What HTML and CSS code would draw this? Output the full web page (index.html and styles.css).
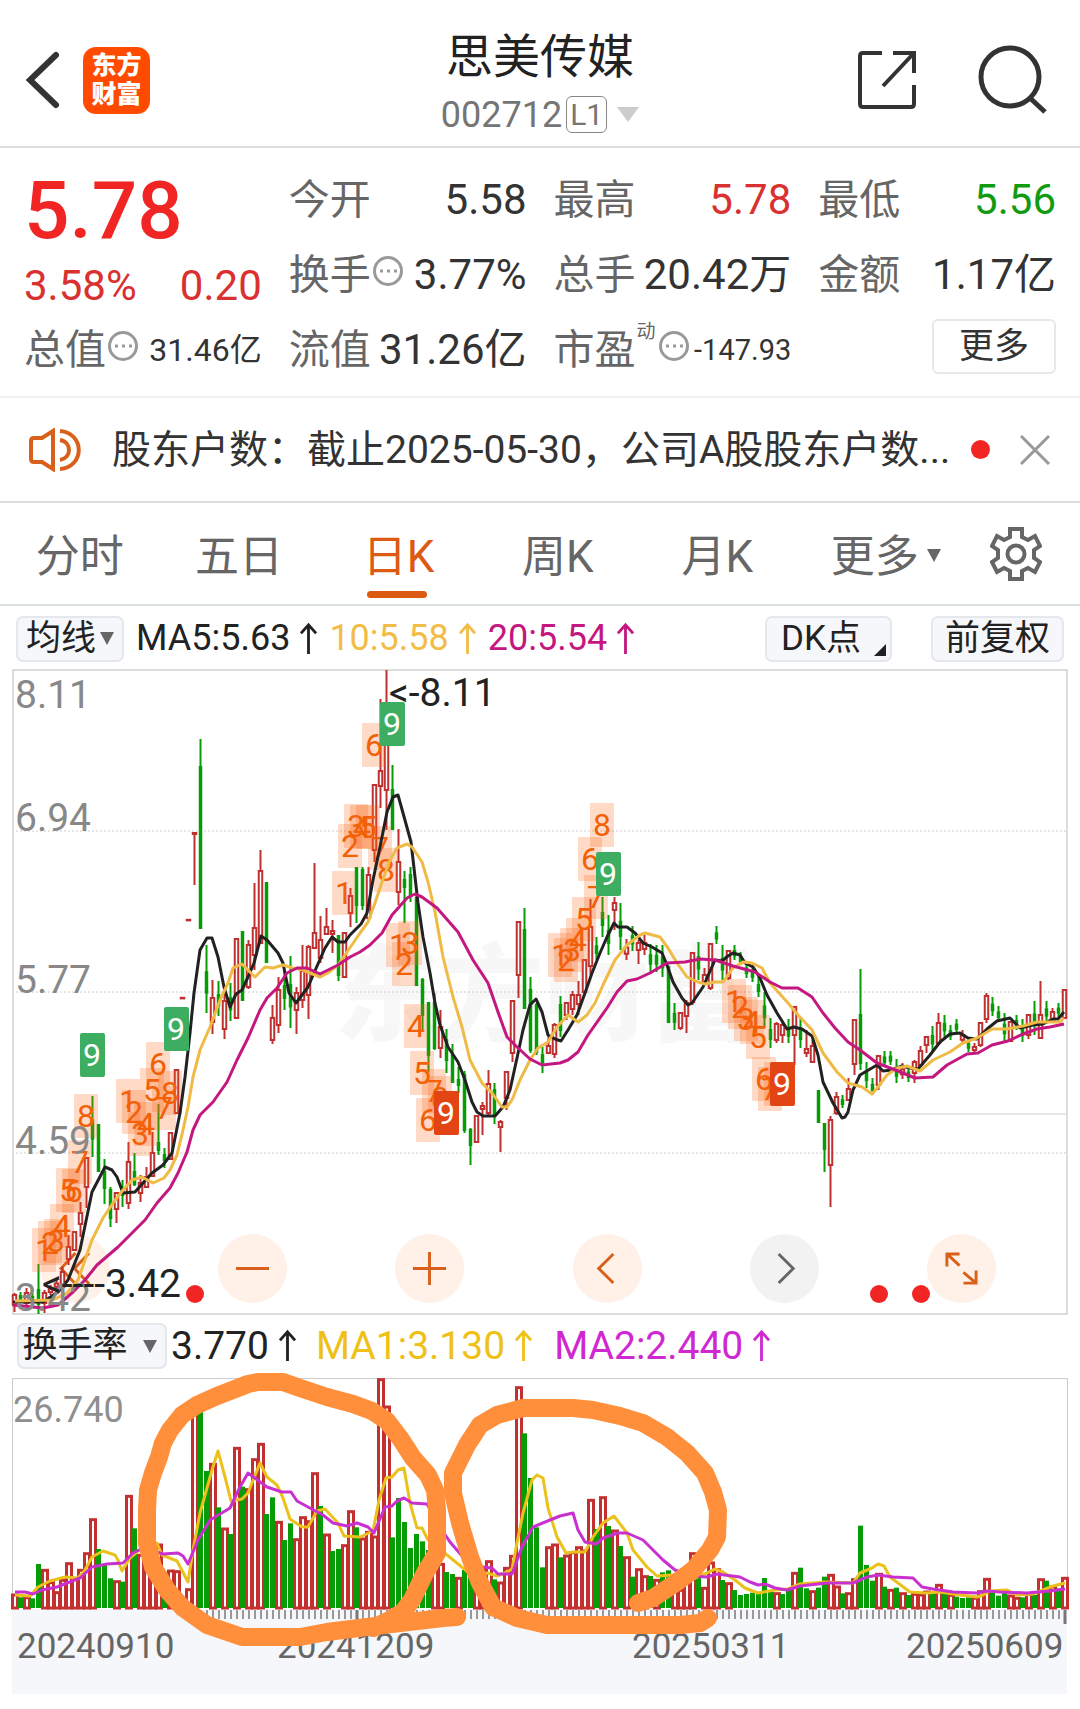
FILE: index.html
```html
<!DOCTYPE html>
<html lang="zh-CN">
<head>
<meta charset="utf-8">
<meta name="viewport" content="width=device-width, initial-scale=1">
<title>思美传媒 002712</title>
<link rel="stylesheet" href="styles.css">
</head>
<body>
<header class="topbar">
  <div class="topbar-left">
    <button class="icon-btn" aria-label="返回"><svg width="36" height="60" viewBox="0 0 36 60"><path d="M31 5 5 30l26 25" fill="none" stroke="#333" stroke-width="6" stroke-linecap="round"/></svg></button>
    <div class="logo"><span>东方</span><span>财富</span></div>
  </div>
  <div class="stock">
    <h1>思美传媒</h1>
    <div class="code"><span>002712</span><span class="level">L1</span><svg width="22" height="15" viewBox="0 0 22 15"><path d="M0 0h22L11 15z" fill="#ccc"/></svg></div>
  </div>
  <div class="topbar-right">
    <button class="icon-btn" aria-label="分享"><svg width="60" height="60" viewBox="0 0 60 60" fill="none" stroke="#333" stroke-width="4"><path d="M25 3H6Q3 3 3 6v48q0 3 3 3h48q3 0 3-3V35M36 3h21v20M57 3 26 36"/></svg></button>
    <button class="icon-btn" aria-label="搜索"><svg width="70" height="70" viewBox="0 0 70 70" fill="none" stroke="#333" stroke-width="5"><circle cx="32" cy="32" r="29"/><path d="m52 53 15 14"/></svg></button>
  </div>
</header>

<section class="quote">
  <div class="col">
    <div class="price">5.78</div>
    <div class="pair change up"><span>3.58%</span><span>0.20</span></div>
    <div class="pair"><span class="label">总值<svg class="info" viewBox="0 0 30 30"><circle cx="15" cy="15" r="13.5"/><path d="M7 15h3m4 0h3m4 0h3"/></svg></span><span class="small">31.46亿</span></div>
  </div>
  <div class="col">
    <div class="pair"><span class="label">今开</span><span>5.58</span></div>
    <div class="pair"><span class="label">换手<svg class="info" viewBox="0 0 30 30"><circle cx="15" cy="15" r="13.5"/><path d="M7 15h3m4 0h3m4 0h3"/></svg></span><span>3.77%</span></div>
    <div class="pair"><span class="label">流值</span><span>31.26亿</span></div>
  </div>
  <div class="col">
    <div class="pair"><span class="label">最高</span><span class="up">5.78</span></div>
    <div class="pair"><span class="label">总手</span><span>20.42万</span></div>
    <div class="pair"><span class="label">市盈<small>动</small><svg class="info" viewBox="0 0 30 30"><circle cx="15" cy="15" r="13.5"/><path d="M7 15h3m4 0h3m4 0h3"/></svg></span><span class="tiny">-147.93</span></div>
  </div>
  <div class="col">
    <div class="pair"><span class="label">最低</span><span class="down">5.56</span></div>
    <div class="pair"><span class="label">金额</span><span>1.17亿</span></div>
    <div class="pair more"><button class="more-btn">更多</button></div>
  </div>
</section>

<section class="notice">
  <svg class="speaker" width="52" height="44" viewBox="0 0 52 44" fill="none" stroke="#d9601a" stroke-width="4"><path d="M24 3v38l-11-7H5q-3 0-3-3V13q0-3 3-3h8z"/><path d="M31 3c25 2 25 36 0 38M31 12c12 2 12 18 0 20" /></svg>
  <p>股东户数：截止2025-05-30，公司A股股东户数...</p>
  <span class="dot"></span>
  <button class="icon-btn" aria-label="关闭"><svg width="30" height="30" viewBox="0 0 30 30"><path d="m1 1 28 28M29 1 1 29" stroke="#999" stroke-width="3"/></svg></button>
</section>

<nav class="tabs">
  <a href="#">分时</a>
  <a href="#">五日</a>
  <a href="#" class="active">日K</a>
  <a href="#">周K</a>
  <a href="#">月K</a>
  <a href="#" class="menu">更多<svg width="14" height="13" viewBox="0 0 14 13"><path d="M0 0h14L7 13z" fill="#666"/></svg></a>
  <button class="icon-btn" aria-label="设置"><svg width="52" height="54" viewBox="-26 -27 52 54" fill="none" stroke="#666" stroke-width="4"><path d="M-6-25H6V-17L12-14 19-18 24-8 18-4V4L24 8 19 18 12 14 6 17V25H-6V17L-12 14-19 18-24 8-18 4V-4L-24-8-19-18-12-14-6-17Z"/><circle r="8.5"/></svg></button>
</nav>

<div class="legend ma">
  <button class="chip">均线<svg width="14" height="13" viewBox="0 0 14 13"><path d="M0 0h14L7 13z" fill="#666"/></svg></button>
  <span class="black">MA5:5.63<svg class="arrow" viewBox="0 0 18 34"><path d="M9 33V2M1 11 9 2l8 9"/></svg></span>
  <span class="gold">10:5.58<svg class="arrow" viewBox="0 0 18 34"><path d="M9 33V2M1 11 9 2l8 9"/></svg></span>
  <span class="magenta">20:5.54<svg class="arrow" viewBox="0 0 18 34"><path d="M9 33V2M1 11 9 2l8 9"/></svg></span>
  <button class="chip dk">DK点<svg width="12" height="12" viewBox="0 0 12 12"><path d="M12 0v12H0z" fill="#222"/></svg></button>
  <button class="chip">前复权</button>
</div>

<section class="chart price-chart">
  <div class="controls">
    <button aria-label="最早"><svg viewBox="0 0 36 36"><path d="M18 2 3 18l15 16M32 2 17 18l15 16"/></svg></button>
    <button aria-label="缩小"><svg viewBox="0 0 36 36"><path d="M1 18h34"/></svg></button>
    <button aria-label="放大"><svg viewBox="0 0 36 36"><path d="M1 18h34M18 1v34"/></svg></button>
    <button aria-label="向左"><svg viewBox="0 0 36 36"><path d="M24 3 9 18l15 15"/></svg></button>
    <button aria-label="向右" class="off"><svg viewBox="0 0 36 36"><path d="m12 3 15 15-15 15"/></svg></button>
    <button aria-label="全屏"><svg viewBox="0 0 36 36"><path d="M16 3H3v13M3 3l13 12M20 33h13V20M33 33 20 22"/></svg></button>
  </div>
  <svg id="price" viewBox="12 669 1056 646"></svg>
</section>

<div class="legend turnover">
  <button class="chip wide">换手率<svg width="16" height="13" viewBox="0 0 14 13"><path d="M0 0h14L7 13z" fill="#666"/></svg></button>
  <span class="black">3.770<svg class="arrow" viewBox="0 0 18 34"><path d="M9 33V2M1 11 9 2l8 9"/></svg></span>
  <span class="yellow">MA1:3.130<svg class="arrow" viewBox="0 0 18 34"><path d="M9 33V2M1 11 9 2l8 9"/></svg></span>
  <span class="violet">MA2:2.440<svg class="arrow" viewBox="0 0 18 34"><path d="M9 33V2M1 11 9 2l8 9"/></svg></span>
</div>

<section class="chart">
  <svg id="turnover" viewBox="12 1377 1056 317"></svg>
</section>
<script src="chart.js"></script>
</body>
</html>
```
FILE: styles.css
```css
* { box-sizing: border-box; }
body {
  margin: 0;
  background: #fff;
  color: #333;
  font-family: Roboto, "Noto Sans CJK SC", sans-serif;
  line-height: 1.2;
}
button { font: inherit; color: inherit; cursor: pointer; }
svg { display: block; flex: none; }
.icon-btn { border: 0; padding: 0; background: none; }

.topbar {
  display: grid;
  grid-template-columns: 1fr auto 1fr;
  align-items: center;
  height: 148px;
  padding: 14px 25px 0;
  border-bottom: 2px solid #ddd;
}
.topbar-left, .topbar-right { display: flex; align-items: center; }
.topbar-left { gap: 22px; }
.topbar-right { justify-content: flex-end; gap: 61px; padding-right: 7px; }
.logo {
  display: flex;
  flex-direction: column;
  align-items: center;
  justify-content: center;
  width: 67px;
  height: 67px;
  border-radius: 13px;
  background: #ff4b00;
  color: #fff;
  font-size: 25px;
  font-weight: 900;
  line-height: 29px;
}
.stock { display: flex; flex-direction: column; align-items: center; padding-top: 9px; }
h1 { margin: 0; color: #222; font-size: 47px; font-weight: 400; line-height: 60px; }
.code { display: flex; align-items: center; gap: 4px; color: #757575; font-size: 36px; line-height: 56px; }
.level {
  height: 37px;
  width: 41px;
  border: 1px solid #888;
  border-radius: 6px;
  font-size: 30px;
  line-height: 35px;
  text-align: center;
}
.code svg { margin-left: 6px; }

.quote {
  display: grid;
  grid-template-columns: repeat(4, 1fr);
  gap: 27px;
  height: 250px;
  padding: 15px 24px 0;
  border-bottom: 2px solid #f0f0f0;
}
.col { display: flex; flex-direction: column; min-width: 0; }
.pair {
  display: flex;
  justify-content: space-between;
  align-items: center;
  height: 75px;
  font-size: 42px;
  white-space: nowrap;
}
.label { display: flex; align-items: center; color: #666; font-size: 41px; }
.label small { align-self: flex-start; margin: 0 1px; font-size: 19px; line-height: 12px; }
.info { width: 30px; height: 30px; margin: -9px 0 0 2px; fill: none; stroke: #999; stroke-width: 3; }
.small { font-size: 32px; }
.tiny { font-size: 29px; }
.price { height: 97px; color: #f22525; font-size: 80px; font-weight: 500; line-height: 97px; }
.change { height: 53px; }
.up { color: #d93030; }
.down { color: #109b10; }
.more { align-items: flex-start; justify-content: flex-end; padding-top: 6px; }
.more-btn {
  width: 124px;
  height: 55px;
  padding: 0;
  border: 2px solid #e8e8e8;
  border-radius: 6px;
  background: #fff;
  font-size: 35px;
  line-height: 49px;
}

.notice {
  display: flex;
  align-items: center;
  height: 105px;
  padding: 0 30px 0 29px;
  border-bottom: 2px solid #ddd;
}
.notice p {
  flex: 1;
  margin: 0 8px 0 31px;
  overflow: hidden;
  font-size: 39px;
  line-height: 60px;
  white-space: nowrap;
}
.dot { width: 19px; height: 19px; margin-right: 30px; border-radius: 50%; background: #f22525; }

.tabs {
  display: grid;
  grid-template-columns: repeat(6, 4fr) 3fr;
  align-items: center;
  justify-items: center;
  height: 103px;
  padding-right: 4px;
  border-bottom: 2px solid #dadfe2;
  color: #666;
  font-size: 44px;
}
.tabs a {
  display: flex;
  align-items: center;
  gap: 8px;
  height: 100px;
  padding-top: 8px;
  color: inherit;
  text-decoration: none;
  white-space: nowrap;
}
.tabs svg { margin-top: -4px; }
.tabs .icon-btn svg { margin-top: 0; }
.tabs .menu { padding-left: 18px; }
.tabs .active { color: #dd5a12; position: relative; }
.tabs .active::after {
  content: "";
  position: absolute;
  left: 4px;
  bottom: 6px;
  width: 60px;
  height: 7px;
  border-radius: 4px;
  background: #dd5a12;
}

.legend { display: flex; align-items: center; height: 63px; white-space: nowrap; }
.legend span { display: flex; align-items: center; gap: 10px; }
.ma { padding: 2px 16px 0; gap: 12px; font-size: 36px; }
.turnover { height: 62px; padding: 0 17px; font-size: 39px; gap: 22px; }
.turnover .black { margin: 0 -2px 0 -18px; }
.arrow { width: 17px; height: 34px; fill: none; stroke: currentColor; stroke-width: 3; }
.chip {
  display: flex;
  align-items: center;
  justify-content: center;
  height: 46px;
  padding: 0 8px;
  border: 2px solid #e4e7ec;
  border-radius: 7px;
  background: #f6f7fa;
  color: #222;
  font-size: 35px;
  line-height: 42px;
}
.ma .chip:first-child { gap: 4px; }
.ma .chip:last-child { width: 133px; margin-left: 27px; }
.dk { width: 127px; margin-left: auto; gap: 13px; padding: 0 4px 0 14px; }
.dk svg { margin-top: 22px; }
.wide { width: 150px; gap: 14px; padding: 0 6px 0 2px; }
.black { color: #222; }
.gold { color: #f2bd47; }
.magenta { color: #c4177f; }
.yellow { color: #efc117; }
.violet { color: #cf28d2; }

.chart { position: relative; margin: 0 12px; }
.chart > svg { width: 100%; height: auto; overflow: visible; }
.price-chart > svg { position: relative; pointer-events: none; }
.controls {
  position: absolute;
  left: 29px;
  right: 72px;
  bottom: 12px;
  display: flex;
  justify-content: space-between;
}
.controls button {
  display: grid;
  place-items: center;
  width: 69px;
  height: 69px;
  padding: 0;
  border: 0;
  border-radius: 50%;
  background: #fff0e8;
}
.controls svg { width: 35px; height: 35px; fill: none; stroke: #d9601a; stroke-width: 3; }
.controls .off { background: #f2f2f2; }
.controls .off svg { stroke: #666; }

.frame { fill: none; stroke: #ddd; stroke-width: 2; }
.grid { stroke: #ccc; stroke-width: 1; stroke-dasharray: 2 2; }
.level-line { stroke: #ccc; stroke-width: 1; }
.watermark { fill: #f7f7f7; font-size: 105px; font-weight: 900; }
.axis-price { fill: #888; font-size: 39px; }
.axis-rate { fill: #8f8f8f; font-size: 36px; }
.axis-date { fill: #666; font-size: 35px; }
.mark { fill: #222; font-size: 39px; }
.axis-band { fill: #f6f7fa; }
.tick { stroke: #999; stroke-width: 2; }
.tick-major { stroke: #777; stroke-width: 3; }
.wick { fill: none; stroke-width: 2; }
.body { stroke-width: 2; }
.r { stroke: #bf3131; }
.g { stroke: #069c06; }
.body.r { fill: #fff; }
.body.g { fill: #069c06; }
.bar-r { stroke: #c43030; fill: #fff; stroke-width: 3; }
.bar-g { fill: #069c06; }
.line { fill: none; stroke-width: 3; stroke-linejoin: round; }
.line-black { stroke: #222; }
.line-gold { stroke: #efbb46; }
.line-magenta { stroke: #c4177f; }
.line-yellow { stroke: #ebc11b; }
.line-violet { stroke: #c930d0; }
.count-box { fill: #fa6414; fill-opacity: .24; }
.count { fill: #f26005; font-size: 32px; text-anchor: middle; }
.nine-green { fill: #3dae61; }
.nine-red { fill: #e24414; }
.nine { fill: #fff; font-size: 32px; text-anchor: middle; }
.alert { fill: #f22525; }
.pen { fill: none; stroke: #ff8f3b; stroke-width: 18; stroke-linecap: round; stroke-linejoin: round; }
```
FILE: chart.js
```js
// Daily candles: colour, then high, body top, body bottom, low.
// Entries with two numbers are a bare high-low range.
const candles = `r1293,1295,1305,1312 g1292,1302 r1288,1293,1303,1307 g1293,1303 g1264,1290,1304,1314 r1290,1293,1303,1313 r1285,1295 r1279,1290 r1267,1272,1287,1290 r1235,1247,1259,1265
r1232,1232,1250,1250 r1202,1213,1224,1237 r1157,1158,1187,1208 g1096,1157 g1125,1125,1171,1172 g1159,1172,1188,1204 g1187,1190,1218,1227 r1192,1193,1209,1223 g1180,1190,1195,1207 r1142,1162,1203,1209
g1153,1172,1184,1186 r1175,1183,1193,1202 r1167,1177,1187,1188 r1132,1153,1176,1177 g1104,1143,1150,1155 g1148,1155,1160,1168 r1133,1133,1159,1159 r1070,1070,1113,1113 r997,999 r919,921
r833,833,834,885 g739,767,928,928 g945,1013 r980,998,1022,1034 g981,1016 r990,1001,1029,1039 g983,1021 r938,939,1018,1019 g932,932,1000,1000 r940,945,987,989
r883,928,955,970 r850,871,943,943 g883,883,962,963 r1005,1018,1040,1044 r977,990,1025,1033 g970,1010 g956,1028 r987,993,1010,1034 r945,971,1000,1008 r945,947,995,1019
r863,933,948,949 r916,940,958,963 r908,927,934,935 r920,931,934,953 g935,936,975,981 r933,933,977,977 r888,896,913,927 g867,868,905,923 g867,870,905,910 r867,875,918,920
r784,785,850,862 r699,771,786,808 r670,740,790,830 g765,790,829,830 r829,862,892,905 g871,880,887,923 g867,875,895,902 g895,898,985,986 g978,980,1015,1030 g1003,1003,1055,1072
g993,1003,1048,1050 r1010,1027,1048,1058 g1029,1040,1060,1073 g1044,1055,1082,1083 g1067,1080,1085,1093 g1071,1075,1130,1133 g1128,1130,1145,1165 r1116,1116,1142,1142 r1102,1106,1109,1135 r1070,1084,1113,1115
g1083,1090,1115,1124 r1120,1122,1127,1152 r1072,1072,1098,1110 r1000,1001,1053,1062 r922,922,975,998 g908,930,1008,1009 g977,990,1050,1053 g1003,1005,1052,1055 g1047,1055,1062,1073 r1035,1046,1053,1053
r1023,1025,1054,1058 g996,1005,1030,1037 r1002,1003,1015,1020 r991,995,1009,1015 r981,995,1004,1015 r959,960,992,993 r899,927,966,975 g937,960 g897,937 g915,955
r897,903,910,930 g903,950 r939,960 g926,951 r940,943,950,964 r935,955 g944,972 g945,972 g945,977 g967,967,1022,1023
g1003,1030 r1013,1013,1028,1030 r1000,1003,1016,1033 r952,953,1002,1005 g942,980 r968,975,983,985 r943,944,988,990 g926,944 g945,980 r951,951,978,980
g945,960 g952,965 g962,978 g965,982 g977,997 g992,1028 g1018,1048 r1022,1024,1040,1043 r1023,1025,1035,1043 g1019,1043
r1006,1007,1035,1065 g1018,1048 r1030,1049,1053,1057 r1040,1046,1062,1062 g1091,1091,1122,1122 g1123,1124,1149,1172 r1116,1120,1165,1207 r1092,1097,1113,1115 g1095,1108 r1078,1089,1100,1100
r1020,1020,1064,1075 g969,1015,1063,1070 g1062,1088 g1078,1095 r1055,1056,1085,1090 g1051,1067 g1051,1065 g1059,1083 r1063,1079 g1066,1082
r1060,1062,1073,1083 r1046,1051,1065,1066 r1036,1037,1045,1053 g1026,1051 r1013,1023,1043,1045 g1015,1037 g1025,1040 g1019,1033 r1030,1044 g1038,1052
r1043,1047,1050,1053 r1022,1023,1045,1047 r993,996,1019,1023 g997,1016 g1006,1022 g1013,1042 r1021,1022,1041,1042 g1015,1030 g1019,1042 r1014,1015,1035,1039
g1001,1035 r981,1015,1038,1039 g1001,1022 r1008,1012,1020,1020 g1003,1017 r989,990,1018,1018`.split(/\s+/);

// Turnover bars: colour and height in thirds of a unit below the band's top.
const bars = `r852 g862 r860 g865 g762 r778 r815 r845 r808 r758 r805 r778 r728 r626 g717 g765 g805 r812 g815 r556
g655 r733 r720 r710 r702 g785 r780 r782 r885 r836 r300 g300 g483 r460 g592 r654 g672 r412 g530 r536
r446 r400 g612 g562 r634 g690 g640 r686 r620 r632 r488 g588 r672 g723 g717 r704 r602 g652 r684 r664
r678 r206 r288 g682 g564 g636 g714 g672 g694 g720 r750 r760 g786 g792 r802 g780 g790 r780 r775 r752
g808 r816 r772 r736 r230 g370 g504 g652 g772 r710 r702 g742 r735 r725 r710 r720 r568 g657 r560 g648
r660 g708 r740 g800 r776 r797 g798 r808 g787 g781 r820 r838 r800 r728 g790 r832 r756 r776 g810 r818
g840 g855 g852 g848 g845 g804 g845 r848 g852 g840 r787 g773 g835 r842 g833 g800 r793 r828 g850 r848
r806 g647 g765 g812 r790 g830 r838 g833 r848 g855 r850 r852 r843 g850 r823 g850 r853 g860 g864 g862
r862 r842 r805 g848 g857 g848 r855 r862 g862 r850 g855 r806 g812 r828 g835 r802`.split(/\s+/);

const ma5 = "13,1302 43,1302 58,1292 68,1280 80,1250 92,1192 105,1167 112,1170 117,1177 123,1193 135,1192 143,1183 152,1173 163,1165 172,1153 180,1113 185,1077 190,1033 194,993 200,950 207,938 212,938 218,957 224,987 230,1007 236,994 242,990 248,977 254,963 261,936 267,940 278,953 283,963 289,993 296,1003 308,987 314,973 325,948 332,937 338,942 345,942 350,935 361,924 367,913 373,880 380,847 387,812 393,797 398,795 403,813 411,842 418,903 423,937 430,973 435,1003 440,1025 448,1047 458,1062 465,1080 472,1102 477,1112 483,1116 495,1116 503,1107 510,1090 517,1058 523,1030 530,1005 536,999 542,1012 548,1035 555,1039 561,1041 568,1030 577,1015 585,993 592,973 600,953 607,937 614,923 618,927 627,927 635,933 643,943 652,947 662,953 667,965 673,982 682,998 688,1005 692,1003 703,987 715,960 722,961 728,956 733,953 740,955 745,963 753,967 760,978 767,995 777,1013 787,1029 794,1027 802,1029 812,1036 818,1055 823,1082 833,1103 842,1118 845,1117 848,1112 853,1090 860,1075 877,1065 883,1071 892,1070 902,1066 910,1068 918,1069 930,1055 940,1042 950,1034 960,1033 968,1038 977,1039 987,1029 997,1021 1010,1018 1020,1028 1033,1025 1043,1024 1053,1019 1058,1019 1064,1012";
const ma10 = "15,1301 53,1300 67,1293 78,1280 85,1260 92,1240 103,1218 113,1203 123,1190 132,1180 142,1177 153,1183 164,1178 170,1170 177,1155 183,1130 188,1107 193,1077 200,1050 210,1027 220,1000 228,983 233,968 242,964 248,970 255,977 265,967 273,968 283,965 293,968 303,970 320,977 328,973 338,965 345,955 360,933 368,922 375,903 382,882 390,860 397,848 407,844 412,847 422,862 428,882 435,912 443,957 453,997 462,1027 470,1060 482,1083 492,1093 502,1107 507,1107 512,1100 520,1080 530,1060 538,1048 548,1042 557,1027 568,1015 578,1022 587,1015 595,1003 603,985 615,960 627,945 640,935 645,933 660,937 668,948 677,963 687,977 698,982 705,984 715,982 723,982 733,968 743,962 752,963 762,968 770,983 788,1003 798,1015 812,1030 823,1053 837,1072 848,1083 862,1087 872,1094 878,1087 887,1075 897,1068 907,1066 920,1071 933,1060 950,1052 963,1043 977,1038 992,1029 1007,1029 1023,1026 1037,1022 1050,1022 1060,1022 1064,1018";
const ma20 = "13,1305 43,1308 58,1305 73,1292 85,1280 97,1265 118,1247 132,1233 145,1220 157,1203 170,1188 178,1173 187,1152 193,1130 200,1115 213,1102 227,1082 237,1060 248,1038 260,1010 267,998 277,988 287,973 297,968 307,968 320,974 328,970 338,965 350,957 360,952 370,945 382,933 392,915 407,898 415,894 422,897 437,908 458,932 473,960 488,983 498,1012 507,1037 517,1047 530,1059 542,1065 560,1063 568,1060 578,1052 588,1035 607,1008 617,992 627,981 637,979 650,973 667,963 685,962 700,959 715,960 733,966 755,972 770,982 782,988 798,988 812,997 823,1013 835,1028 848,1042 860,1050 877,1063 898,1071 915,1078 933,1077 947,1065 967,1054 978,1053 992,1045 1008,1041 1023,1034 1037,1029 1050,1027 1064,1024";
const rate1 = "15,1595 30,1596 38,1587 50,1581 65,1577 78,1578 85,1570 92,1557 103,1551 115,1555 118,1560 122,1571 130,1558 138,1551 157,1543 162,1555 177,1561 188,1582 193,1550 200,1513 212,1470 218,1451 225,1477 231,1501 242,1499 248,1493 260,1463 267,1477 277,1485 283,1498 290,1519 302,1527 308,1527 317,1511 325,1509 338,1523 344,1536 360,1537 373,1531 379,1500 386,1478 392,1477 398,1470 404,1468 410,1503 417,1528 422,1528 428,1540 447,1555 463,1568 473,1577 487,1573 497,1576 507,1572 512,1569 517,1543 523,1513 532,1480 537,1475 543,1478 548,1508 557,1537 566,1553 573,1552 585,1552 593,1537 603,1523 614,1516 627,1533 633,1550 647,1567 657,1576 673,1575 690,1580 707,1573 715,1569 723,1572 735,1580 745,1588 758,1593 775,1590 788,1589 800,1584 825,1582 853,1583 860,1573 872,1568 878,1564 884,1566 890,1577 902,1586 910,1592 927,1593 940,1592 960,1595 977,1597 983,1595 990,1591 1007,1590 1017,1595 1033,1594 1043,1590 1053,1586 1065,1583";
const rate2 = "15,1592 25,1592 33,1594 42,1590 57,1587 67,1583 80,1578 92,1567 107,1564 123,1563 133,1553 143,1548 163,1554 178,1553 183,1556 188,1564 198,1540 210,1520 230,1508 240,1487 248,1473 267,1487 282,1492 291,1492 297,1501 308,1507 323,1515 333,1523 347,1526 357,1523 368,1527 374,1533 385,1507 392,1506 397,1501 404,1498 412,1503 427,1504 440,1527 450,1542 463,1557 483,1567 492,1568 498,1574 512,1574 522,1547 533,1527 560,1516 573,1513 578,1530 585,1542 596,1544 603,1538 618,1533 627,1533 643,1540 663,1560 675,1570 690,1576 707,1577 717,1574 740,1577 750,1582 758,1585 765,1584 775,1588 787,1590 800,1586 827,1583 853,1583 867,1577 878,1575 893,1577 913,1578 922,1587 933,1589 953,1592 977,1593 987,1591 1000,1592 1027,1593 1050,1591 1065,1589";

// Nine-turn sequences: colour of the ninth, left edge of the first, top edge of each.
const runs = [
  ["green", 32, [1228, 1221, 1219, 1204, 1168, 1169, 1140, 1094, 1033]],
  ["green", 116, [1079, 1090, 1112, 1102, 1068, 1042, 1086, 1071, 1007]],
  ["green", 332, [871, 824, 804, 805, 805, 723, 826, 848, 702]],
  ["red", 386, [923, 942, 921, 1004, 1051, 1098, 1069, 1076, 1091]],
  ["green", 548, [933, 938, 928, 918, 897, 837, 875, 803, 852]],
  ["red", 722, [979, 985, 997, 1000, 1015, 1057, 1067, 1062, 1062]]
];

const STEP = 6;
const FIRST = 15;
const line = (name, pts) => `<polyline class="line line-${name}" points="${pts}"/>`;
const text = (cls, x, y, s) => `<text class="${cls}" x="${x}" y="${y}">${s}</text>`;

function drawPrice() {
  let out = text("watermark", 334, 1032, "东方财富");
  for (const y of [831, 992, 1153]) out += `<line class="grid" x1="12" x2="1067" y1="${y}" y2="${y}"/>`;
  out += `<line class="level-line" x1="832" x2="1067" y1="1114" y2="1114"/>`;
  out += `<rect class="frame" x="13" y="670" width="1054" height="644"/>`;
  candles.forEach((c, i) => {
    const x = FIRST + i * STEP - 0.5;
    const n = c.slice(1).split(",").map(Number);
    const [hi, top, bottom, lo] = n.length === 4 ? n
      : [n[0], n[0] + (n[1] - n[0]) * 0.4, n[0] + (n[1] - n[0]) * 0.7, n[1]];
    const half = c[0] === "r" ? 1.75 : 0.75;
    out += `<path class="wick ${c[0]}" d="M${x} ${hi}V${top}M${x} ${bottom}V${lo}"/>`;
    out += `<path class="body ${c[0]}" d="M${x - half} ${top}H${x + half}V${bottom}H${x - half}z"/>`;
  });
  for (const [colour, left, tops] of runs) {
    tops.slice(0, 8).forEach((t, k) => {
      out += `<rect class="count-box" x="${left + k * STEP}" y="${t}" width="24" height="44" rx="1"/>`;
      out += text("count", left + 12 + k * STEP, t + 33, k + 1);
    });
  }
  out += line("black", ma5) + line("gold", ma10) + line("magenta", ma20);
  for (const [colour, left, tops] of runs) {
    out += `<rect class="nine-${colour}" x="${left + 48}" y="${tops[8]}" width="25" height="44" rx="2"/>`;
    out += text("nine", left + 60, tops[8] + 33, 9);
  }
  out += text("axis-price", 15, 708, "8.11") + text("axis-price", 15, 831, "6.94")
    + text("axis-price", 15, 993, "5.77") + text("axis-price", 15, 1154, "4.59")
    + text("axis-price", 15, 1311, "3.42");
  out += text("mark", 389, 706, "&lt;-8.11") + text("mark", 42, 1297, "&lt;----3.42");
  for (const x of [195, 879, 921]) out += `<circle class="alert" cx="${x}" cy="1294" r="9"/>`;
  document.getElementById("price").innerHTML = out;
}

function drawTurnover() {
  let out = `<rect class="axis-band" x="12" y="1609" width="1055" height="85"/>`;
  out += `<path class="level-line" fill="none" d="M12.5 1609V1378.500H1067.500V1609"/>`;
  bars.forEach((b, i) => {
    const x = FIRST + i * STEP;
    const y = 1310 + b.slice(1) / 3;
    out += b[0] === "r"
      ? `<rect class="bar-r" x="${x - 2.5}" y="${y + 1}" width="5" height="${1607 - y}"/>`
      : `<rect class="bar-g" x="${x - 3}" y="${y}" width="5" height="${1608 - y}"/>`;
  });
  for (let x = 201; x < 1065; x += STEP) out += `<line class="tick" x1="${x}" x2="${x}" y1="1610" y2="1619"/>`;
  for (const x of [357, 1065]) out += `<line class="tick-major" x1="${x}" x2="${x}" y1="1610" y2="1624"/>`;
  out += line("yellow", rate1) + line("violet", rate2);
  out += text("axis-rate", 13, 1422, "26.740");
  out += text("axis-date", 17, 1658, "20240910") + text("axis-date", 277, 1658, "20241209")
    + text("axis-date", 632, 1658, "20250311") + text("axis-date", 906, 1658, "20250609");
  const pen = [
    "457,1617 443,1618 400,1623 367,1627 327,1632 300,1637 242,1637 207,1625 183,1608 167,1590 153,1567 147,1543 147,1510 148,1490 153,1473 159,1457 163,1443 170,1430 182,1415 197,1405 217,1396 230,1391 248,1384 258,1382 283,1382 300,1388 327,1397 353,1404 372,1411 387,1421 400,1438 413,1458 428,1475 435,1490 437,1510 437,1553 425,1573 412,1600 403,1612 390,1620 373,1628",
    "638,1603 653,1598 677,1582 693,1570 710,1550 717,1537 718,1510 713,1492 705,1473 687,1453 667,1437 643,1423 620,1416 593,1410 573,1408 523,1408 497,1415 480,1425 467,1445 453,1473 453,1493 460,1523 470,1557 480,1583 493,1607 517,1618 547,1625 680,1625 700,1623 708,1618"
  ];
  for (const p of pen) out += `<polyline class="pen" points="${p}"/>`;
  document.getElementById("turnover").innerHTML = out;
}

drawPrice();
drawTurnover();
```
